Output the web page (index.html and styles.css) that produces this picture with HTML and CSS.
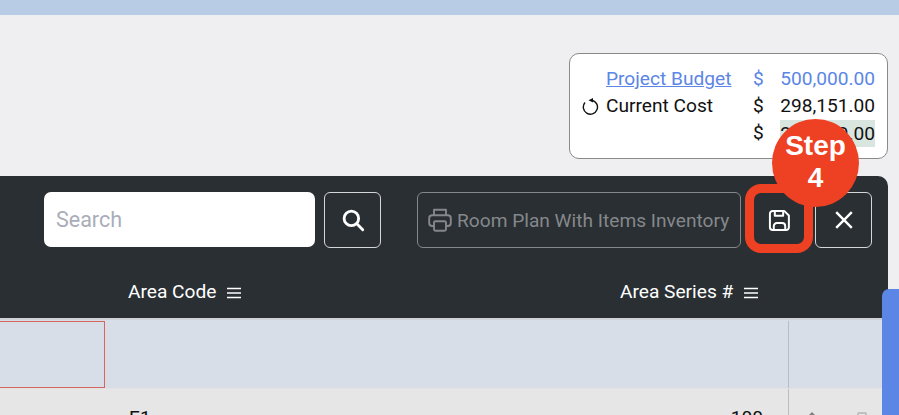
FILE: index.html
```html
<!DOCTYPE html>
<html lang="en">
<head>
<meta charset="utf-8">
<title>Room Plan</title>
<link rel="stylesheet" href="styles.css">
</head>
<body>
<div class="topbar"></div>
<main class="content">
  <section class="budget">
    <span></span><a class="label link" href="#">Project Budget</a><span class="cur link-c">$</span><span class="val link-c">500,000.00</span>
    <svg class="reload" viewBox="0 0 17 17" width="17" height="17" fill="none"><path d="M3 4.500A7.100 7.100 0 1 0 10 2.200" stroke="#111" stroke-width="1.400"/><path d="M11 0 6.500 2.200 11 4.600Z" fill="#111"/></svg><span class="label">Current Cost</span><span class="cur">$</span><span class="val">298,151.00</span>
    <span></span><span></span><span class="cur">$</span><span class="val"><span class="mark">201,849.00</span></span>
  </section>
  <section class="panel">
    <div class="toolbar">
      <div class="search">Search</div>
      <button class="btn square"><svg viewBox="0 0 24 24" width="26" height="26" fill="none" stroke="#fff" stroke-width="2.600" stroke-linecap="round"><circle cx="10.500" cy="10.500" r="6.700"/><path d="M15.500 15.500 21 21"/></svg></button>
      <button class="btn report"><svg viewBox="2 2 20 20" width="24" height="24" fill="none" stroke="currentColor" stroke-width="1.600" stroke-linejoin="round"><path d="M7 8V3.500h10V8"/><rect x="3" y="8" width="18" height="9" rx="2.500"/><rect x="7" y="13" width="10" height="8" rx="1.200" fill="#2a2f33"/></svg><span>Room Plan With Items Inventory</span></button>
      <button class="btn square plain"><svg viewBox="0 0 24 24" width="25" height="25" fill="none" stroke="#fff" stroke-width="1.900" stroke-linejoin="round"><path d="M5.500 2.800h11L21 7.200v11.300a2.700 2.700 0 0 1-2.700 2.700H5.500a2.700 2.700 0 0 1-2.700-2.700V5.500a2.700 2.700 0 0 1 2.700-2.700Z"/><path d="M7.500 3v4.500h8V3"/><path d="M6.500 21v-3.500a3 3 0 0 1 3-3h5a3 3 0 0 1 3 3V21"/></svg></button>
      <button class="btn square"><svg viewBox="0 0 24 24" width="22" height="22" fill="none" stroke="#fff" stroke-width="2.600"><path d="M3.500 3.500 20.500 20.500M20.500 3.500 3.500 20.500"/></svg></button>
    </div>
    <div class="head">
      <div class="col-code">Area Code <svg class="menu" viewBox="0 0 14 12" width="14" height="12"><path d="M0 1.500h14M0 6h14M0 10.500h14" stroke="#fff" stroke-width="1.300"/></svg></div>
      <div class="col-series">Area Series # <svg class="menu" viewBox="0 0 14 12" width="14" height="12"><path d="M0 1.500h14M0 6h14M0 10.500h14" stroke="#fff" stroke-width="1.300"/></svg></div>
    </div>
  </section>
  <section class="table">
    <div class="row blue">
      <div class="cell error"></div>
      <div class="cell"></div>
      <div class="cell line"></div>
    </div>
    <div class="row gray">
      <div class="cell first"></div>
      <div class="cell code">E1</div>
      <div class="cell num">100</div>
      <div class="cell line actions"><i class="tip"></i><i class="bin"></i></div>
    </div>
  </section>
</main>
<div class="sidetab"></div>
<div class="highlight"></div>
<div class="step">Step<br>4</div>
</body>
</html>
```
FILE: styles.css
```css
* { box-sizing: border-box; }
html, body { margin: 0; height: 415px; overflow: hidden; }
body { position: relative; background: #efeff2; font-family: Roboto, "Liberation Sans", sans-serif; color: #111; }
.topbar { height: 15px; background: #b9cce6; }
.content { width: 888px; display: flex; flex-direction: column; }

.budget { align-self: flex-end; margin-top: 38px; width: 319px; height: 106px; padding: 13px 10px 0 12px; background: #fff; border: 1px solid #8a8a8a; border-radius: 10px; display: grid; grid-template-columns: 24px 147px 26px 96px; grid-auto-rows: 27px; font-size: 19.150px; line-height: 24px; align-items: start; }
.label { white-space: nowrap; }
.link { color: #5b86e5; text-decoration: underline; }
.link-c { color: #5b86e5; }
.reload { margin-top: 4px; }
.val { text-align: right; white-space: nowrap; }
.mark { background: #d8e6df; display: inline-block; line-height: 27px; margin-top: -1px; vertical-align: top; }

.panel { margin-top: 17px; height: 142px; background: #2a2f33; border-radius: 0 10px 0 0; color: #fff; }
.toolbar { display: flex; align-items: flex-start; padding: 16px 16px 0 44px; height: 72px; }
.search { flex: none; width: 271px; height: 55px; border-radius: 7px; background: #fff; color: #a9adb9; font-size: 21.500px; line-height: 55px; padding-left: 12px; }
.btn { flex: none; height: 56px; background: transparent; border: 1px solid #d4d6d7; border-radius: 6px; color: #fff; padding: 0; display: flex; align-items: center; justify-content: center; font-family: inherit; }
.square { width: 57px; margin-left: 9px; }
.report { width: 324px; margin-left: 36px; border-color: #85888b; color: #85888b; font-size: 19.150px; justify-content: flex-start; padding-left: 10px; gap: 5px; white-space: nowrap; }
.plain { border: none; margin-left: 8px; width: 60px; }
.plain + .btn { margin-left: 6px; }
.head { position: relative; display: flex; font-size: 19.150px; line-height: 24px; padding-top: 32px; }
.col-code { margin-left: 128px; width: 492px; white-space: nowrap; }
.col-series { white-space: nowrap; }
.menu { margin-left: 6px; vertical-align: -1px; }

.table { border-top: 2px solid #cfd3d8; }
.row { display: flex; }
.blue { height: 69px; background: #d7dee8; border-bottom: 1px solid #e2e2e4; padding-top: 1px; }
.gray { height: 40px; background: #e6e6e6; }
.cell { height: 100%; }
.error { width: 105px; height: 67px; border: 1px solid #d4665f; border-left: none; }
.blue .cell:nth-child(2) { width: 683px; }
.line { border-left: 1px solid #b9bdc3; width: 100px; }
.first { width: 129px; }
.code { width: 400px; font-size: 19.150px; line-height: 24px; padding-top: 17px; }
.num { width: 259px; padding: 17px 25px 0 0; text-align: right; font-size: 19.150px; line-height: 24px; }
.actions { position: relative; }
.tip { position: absolute; left: 18px; top: 18px; border: 5px solid transparent; border-bottom-color: #7e8184; }
.bin { position: absolute; left: 68px; top: 23px; width: 10px; height: 10px; border: 2px solid #bdbfc2; border-radius: 2px; }

.sidetab { position: absolute; left: 882px; top: 289px; width: 17px; height: 126px; background: #5b86e5; border-radius: 7px 0 0 0; }
.highlight { position: absolute; left: 745px; top: 184px; width: 68px; height: 69px; border: 9px solid #ee4023; border-radius: 16px; }
.step { position: absolute; left: 772px; top: 119px; width: 87px; height: 88px; border-radius: 50%; background: #ee4023; color: #fff; font-family: "Liberation Sans", Arial, sans-serif; font-weight: 700; font-size: 28px; line-height: 32px; text-align: center; padding-top: 11px; }
```
